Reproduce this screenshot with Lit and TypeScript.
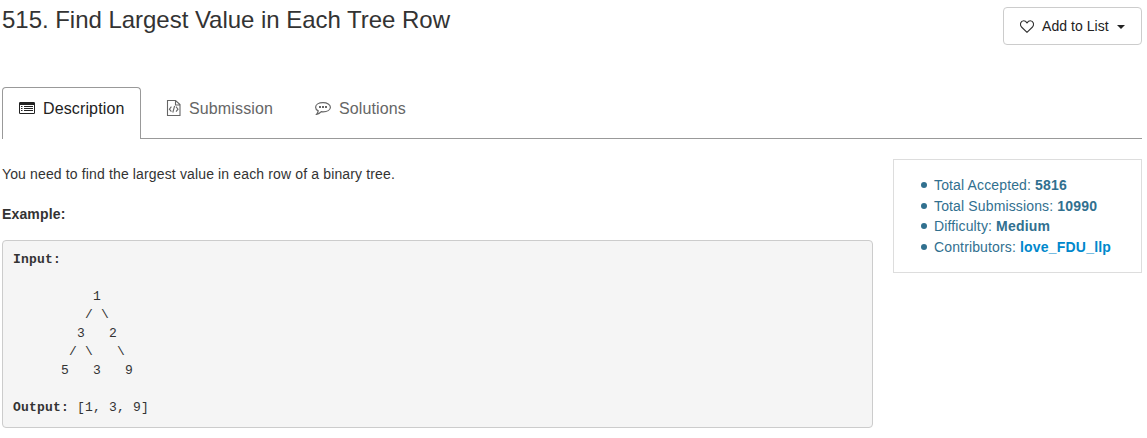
import { LitElement, html, css } from "lit";
import { customElement } from "lit/decorators.js";

const TREE = `

          1
         / \\
        3   2
       / \\   \\
      5   3   9

`;

@customElement("app-root")
export class AppRoot extends LitElement {
  static styles = css`
    :host {
      display: block;
      box-sizing: border-box;
      height: 438px;
      padding: 0 5px 0 2px;
      overflow: hidden;
      background: #fff;
      color: #333;
      font-family: "Liberation Sans", Arial, sans-serif;
      font-size: 14px;
    }
    * { box-sizing: border-box; }
    svg { display: block; flex: none; }
    .head { display: flex; justify-content: space-between; align-items: flex-start; height: 87px; }
    h1 { margin: 6px 0 0; font-size: 24px; line-height: 28px; font-weight: 400; letter-spacing: -0.03px; white-space: nowrap; }
    .add {
      display: flex; align-items: center; width: 139px; height: 38px; margin-top: 7px; padding: 0 0 0 16px;
      border: 1px solid #ccc; border-radius: 4px; background: #fff; color: #222;
      font: 14px "Liberation Sans", Arial, sans-serif; letter-spacing: 0.05px; text-align: left; white-space: nowrap;
    }
    .add span { width: 75px; margin-left: 8px; }
    .add svg:last-child { margin-top: 1px; }
    .tabs { display: flex; height: 52px; font-size: 16px; color: #666; letter-spacing: 0.13px; }
    .tab { display: flex; align-items: flex-start; border-bottom: 1px solid #999; white-space: nowrap; }
    .tab span { line-height: 20px; margin-top: 12px; }
    .tab svg { margin-top: 13px; }
    .desc { width: 139px; padding-left: 16px; border: 1px solid #999; border-bottom: 0; border-radius: 4px 4px 0 0; color: #222; }
    .desc span { margin-left: 7px; margin-top: 11px; }
    .desc svg { margin-top: 12px; }
    .sub { width: 174px; padding-left: 25px; }
    .sub span { margin-left: 8px; }
    .sol { flex: 1; padding-left: 0; }
    .sol span { margin-left: 8px; }
    .main { display: flex; gap: 20px; align-items: flex-start; }
    .content { width: 871px; padding-top: 25px; letter-spacing: 0.14px; }
    p { margin: 0 0 20px; line-height: 20px; white-space: nowrap; }
    .example { letter-spacing: 0.15px; margin-bottom: 16px; }
    pre {
      margin: 0; height: 188px; padding: 9.5px 10px; border: 1px solid #ccc; border-radius: 4px; background: #f5f5f5;
      font: 13px/18.57px "Liberation Mono", "Courier New", monospace; letter-spacing: 0.2px;
    }
    .stats { width: 249px; height: 114px; margin-top: 20px; border: 1px solid #ddd; padding: 15px 0 0 27px; color: #31708f; }
    ul { margin: 0; padding: 0; list-style: none; }
    li { display: flex; align-items: center; height: 20.6px; letter-spacing: 0.14px; white-space: pre; }
    li::before { content: ""; width: 6px; height: 6px; margin-right: 7px; border-radius: 50%; background: #31708f; }
    b { letter-spacing: 0.2px; }
    .link { color: #0088cc; }
  `;

  render() {
    return html`
      <div class="head">
        <h1>515. Find Largest Value in Each Tree Row</h1>
        <button class="add">
          <svg width="14" height="13" viewBox="0 0 14 13" fill="none" stroke="#333" stroke-width="1.1"><path d="M7 12.3 1.5 7C-.5 4.6 .6 .8 3.7 .8 5.4 .8 6.4 2 7 2.8 7.6 2 8.6 .8 10.3 .8 13.4 .8 14.5 4.6 12.5 7Z" /></svg>
          <span>Add to List</span>
          <svg width="8" height="4" viewBox="0 0 8 4"><path d="M0 0H8L4 4Z" fill="#222" /></svg>
        </button>
      </div>
      <div class="tabs">
        <div class="tab desc">
          <svg width="17" height="16" viewBox="0 0 17 16"><path d="M1.2 2H14.8Q16 2 16 3.2V12.8Q16 14 14.8 14H1.2Q0 14 0 12.8V3.2Q0 2 1.2 2ZM1 5V13H15V5Z" fill="#222" fill-rule="evenodd" /><path d="M2 6.5H3.5M5 6.5H14M2 8.5H3.5M5 8.5H14M2 10.5H3.5M5 10.5H14" stroke="#222" /></svg>
          <span>Description</span>
        </div>
        <div class="tab sub">
          <svg width="15" height="16" viewBox="0 0 15 16" fill="none" stroke="#666" stroke-width="1.1"><path d="M1.5 .5H9.5L14 4.5V15.5H1.5V.5ZM9.5 .5V5H14" /><path d="M5.4 6.7 3.4 9.2 5.4 11.7M10 6.7 12 9.2 10 11.7M8.6 6 6.8 12.5" /></svg>
          <span>Submission</span>
        </div>
        <div class="tab sol">
          <svg width="16" height="16" viewBox="0 0 16 16" fill="none" stroke="#666" stroke-width="1.2"><path d="M8 2.6C12.2 2.6 15.4 4.5 15.4 7.2S12.2 11.8 8 11.8Q7.2 11.8 6.3 11.7 4.3 13.9 1.6 14.3 3 12.5 3.2 10.9 .6 9.5 .6 7.2C.6 4.5 3.8 2.6 8 2.6Z" /><path d="M4 7H6M7 7H9M10 7H12" stroke-width="2" /></svg>
          <span>Solutions</span>
        </div>
      </div>
      <div class="main">
        <div class="content">
          <p>You need to find the largest value in each row of a binary tree.</p>
          <p class="example"><strong>Example:</strong></p>
          <pre><strong>Input:</strong>${TREE}<strong>Output:</strong> [1, 3, 9]</pre>
        </div>
        <div class="stats">
          <ul>
            <li>Total Accepted: <b>5816</b></li>
            <li>Total Submissions: <b>10990</b></li>
            <li>Difficulty: <b>Medium</b></li>
            <li>Contributors: <b class="link">love_FDU_llp</b></li>
          </ul>
        </div>
      </div>
    `;
  }
}
